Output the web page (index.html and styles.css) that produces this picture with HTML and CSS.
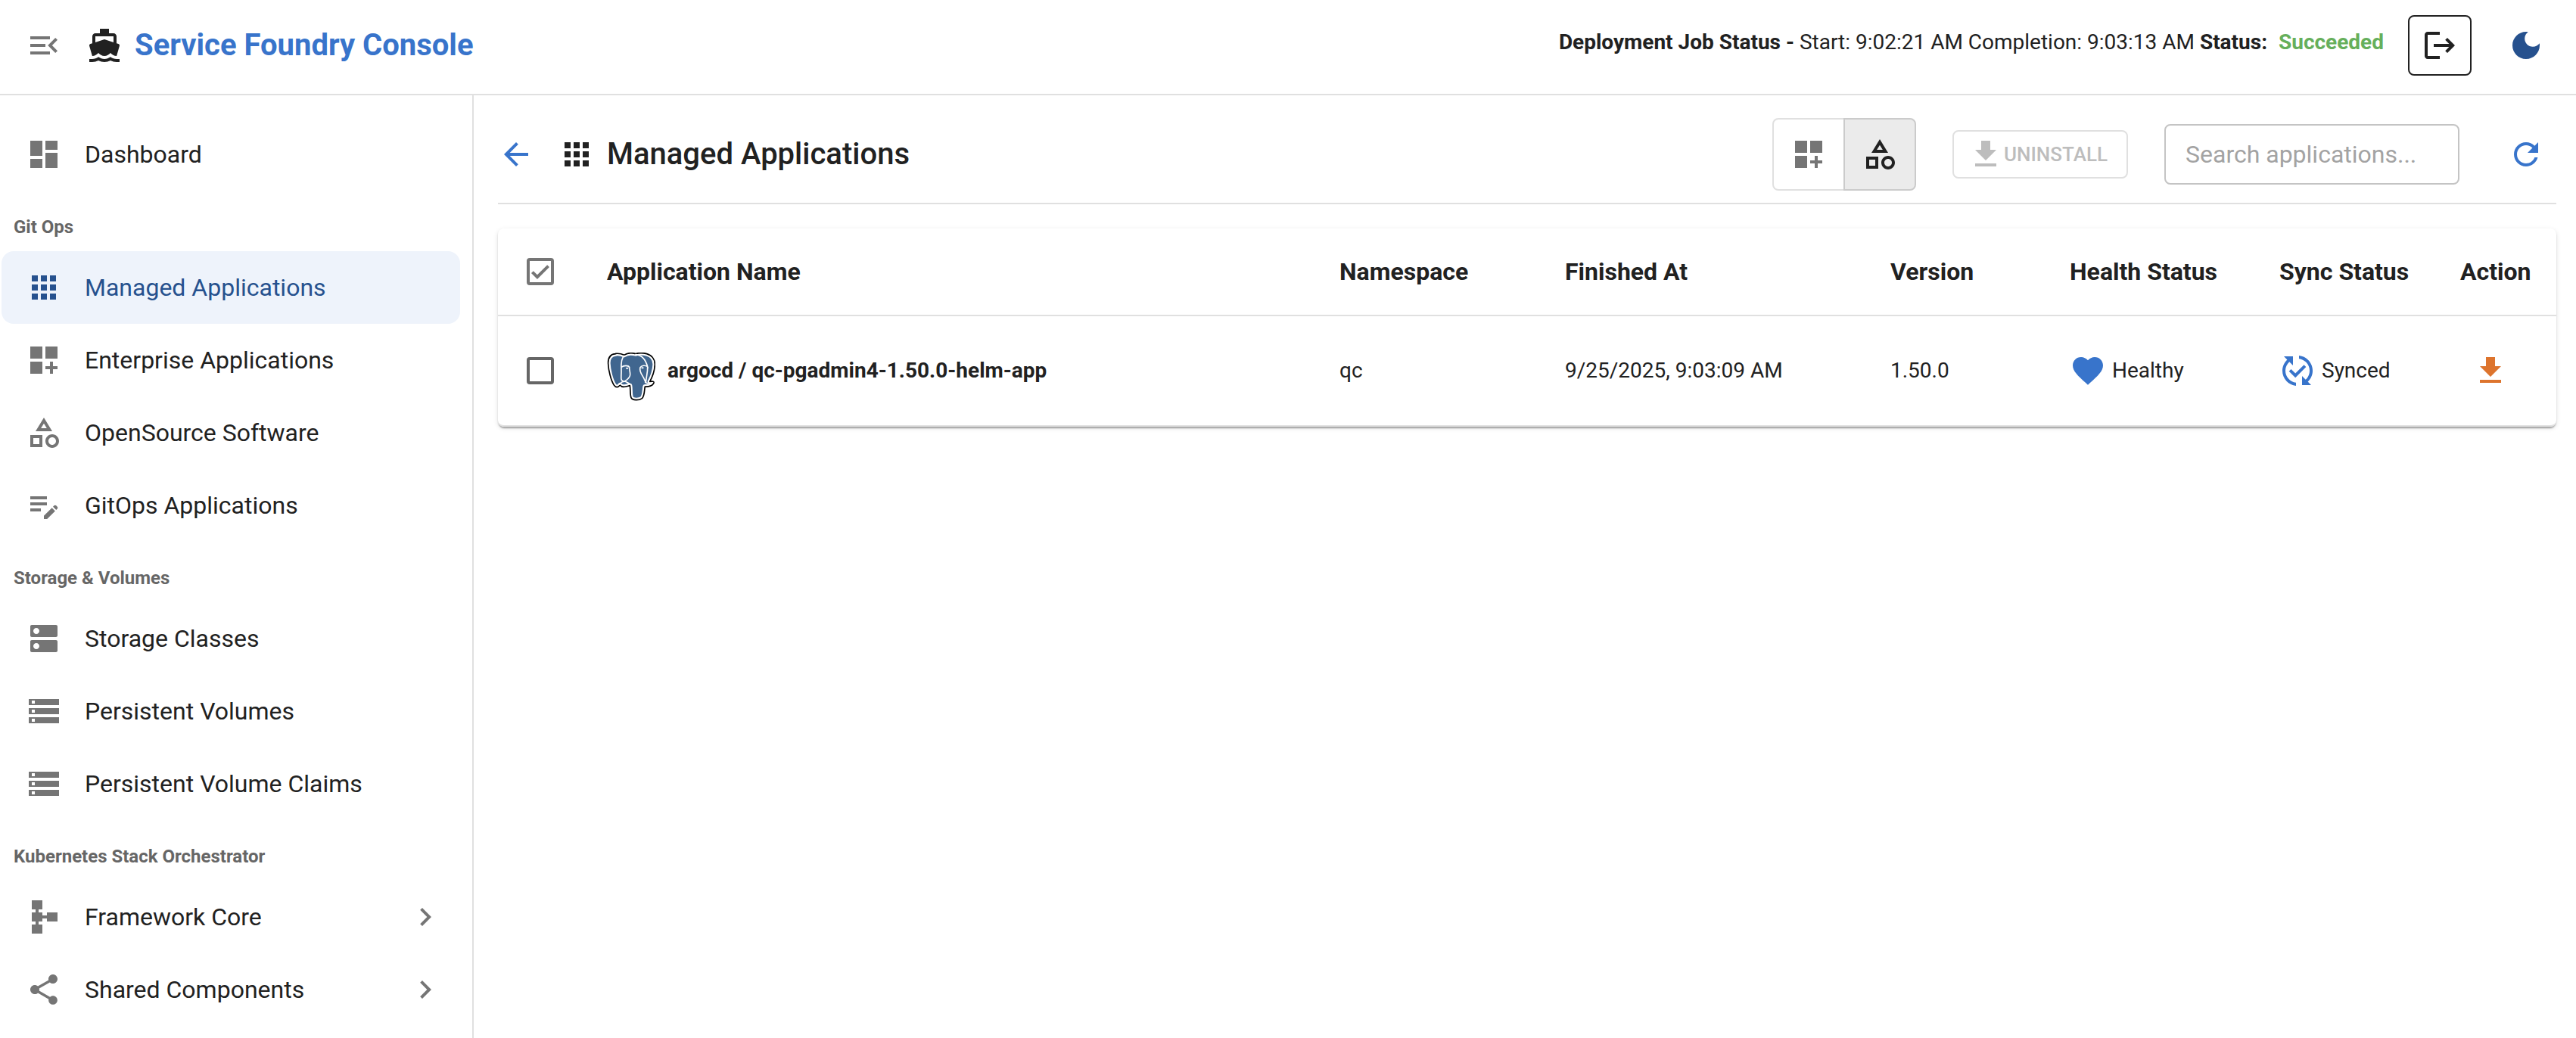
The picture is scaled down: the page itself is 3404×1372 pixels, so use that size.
FILE: index.html
```html
<!DOCTYPE html>
<html lang="en">
<head>
<meta charset="utf-8">
<title>Service Foundry Console</title>
<meta name="viewport" content="width=device-width, initial-scale=1">
<link rel="stylesheet" href="styles.css">
</head>
<body>
<svg class="sprite" aria-hidden="true">
  <symbol id="i-menu" viewBox="0 0 24 24"><path d="M3 18h13v-2H3v2zm0-5h10v-2H3v2zm0-7v2h13V6H3zm18 9.59L17.42 12 21 8.41 19.59 7l-5 5 5 5L21 15.59z"/></symbol>
  <symbol id="i-boat" viewBox="0 0 24 24"><path d="M20 21c-1.39 0-2.78-.47-4-1.32-2.44 1.71-5.56 1.71-8 0C6.78 20.53 5.39 21 4 21H2v2h2c1.38 0 2.74-.35 4-.99 2.52 1.29 5.48 1.29 8 0 1.26.65 2.62.99 4 .99h2v-2h-2zM3.95 19H4c1.6 0 3.02-.88 4-2 .98 1.12 2.4 2 4 2s3.02-.88 4-2c.98 1.12 2.4 2 4 2h.05l1.89-6.68c.08-.26.06-.54-.06-.78s-.34-.42-.6-.5L20 10.62V6c0-1.1-.9-2-2-2h-3V1H9v3H6c-1.1 0-2 .9-2 2v4.62l-1.29.42c-.26.08-.48.26-.6.5s-.15.52-.06.78L3.95 19zM6 6h12v3.97L12 8 6 9.97V6z"/></symbol>
  <symbol id="i-dashboard" viewBox="0 0 24 24"><path d="M3 13h8V3H3v10zm0 8h8v-6H3v6zm10 0h8V11h-8v10zm0-18v6h8V3h-8z"/></symbol>
  <symbol id="i-apps" viewBox="0 0 24 24"><path d="M4 8h4V4H4v4zm6 12h4v-4h-4v4zm-6 0h4v-4H4v4zm0-6h4v-4H4v4zm6 0h4v-4h-4v4zm6-10v4h4V4h-4zm-6 4h4V4h-4v4zm6 6h4v-4h-4v4zm0 6h4v-4h-4v4z"/></symbol>
  <symbol id="i-customize" viewBox="0 0 24 24"><path d="M3 3h8v8H3zm10 0h8v8h-8zM3 13h8v8H3zm15 0h-2v3h-3v2h3v3h2v-3h3v-2h-3z"/></symbol>
  <symbol id="i-category" viewBox="0 0 24 24"><path d="M12 2l-5.5 9h11L12 2zm0 3.84L13.93 9h-3.87L12 5.84zM17.5 13c-2.49 0-4.5 2.01-4.5 4.5s2.01 4.5 4.5 4.5 4.5-2.01 4.5-4.5-2.01-4.5-4.5-4.5zm0 7c-1.38 0-2.5-1.12-2.5-2.5s1.12-2.5 2.5-2.5 2.5 1.12 2.5 2.5-1.12 2.5-2.5 2.5zM3 21.5h8v-8H3v8zm2-6h4v4H5v-4z"/></symbol>
  <symbol id="i-editnote" viewBox="0 0 24 24"><path d="M3 10h11v2H3v-2zm0-2h11V6H3v2zm0 8h7v-2H3v2zm15.01-3.13.71-.71c.39-.39 1.02-.39 1.41 0l.71.71c.39.39.39 1.02 0 1.41l-.71.71-2.12-2.12zm-.71.71-5.3 5.3V21h2.12l5.3-5.3-2.12-2.12z"/></symbol>
  <symbol id="i-dns" viewBox="0 0 24 24"><path d="M20 13H4c-.55 0-1 .45-1 1v6c0 .55.45 1 1 1h16c.55 0 1-.45 1-1v-6c0-.55-.45-1-1-1zM7 19c-1.1 0-2-.9-2-2s.9-2 2-2 2 .9 2 2-.9 2-2 2zM20 3H4c-.55 0-1 .45-1 1v6c0 .55.45 1 1 1h16c.55 0 1-.45 1-1V4c0-.55-.45-1-1-1zM7 9c-1.1 0-2-.9-2-2s.9-2 2-2 2 .9 2 2-.9 2-2 2z"/></symbol>
  <symbol id="i-storage" viewBox="0 0 24 24"><path d="M2 20h20v-4H2v4zm2-3h2v2H4v-2zM2 4v4h20V4H2zm4 3H4V5h2v2zm-4 7h20v-4H2v4zm2-3h2v2H4v-2z"/></symbol>
  <symbol id="i-schema" viewBox="0 0 24 24"><path d="M14 9v2h-3V9H8.5V7H11V1H4v6h2.5v2H4v6h2.5v2H4v6h7v-6H8.5v-2H11v-2h3v2h7V9z"/></symbol>
  <symbol id="i-share" viewBox="0 0 24 24"><path d="M18 16.08c-.76 0-1.44.3-1.96.77L8.91 12.7c.05-.23.09-.46.09-.7s-.04-.47-.09-.7l7.05-4.11c.54.5 1.25.81 2.04.81 1.66 0 3-1.34 3-3s-1.34-3-3-3-3 1.34-3 3c0 .24.04.47.09.7L8.04 9.81C7.5 9.31 6.79 9 6 9c-1.66 0-3 1.34-3 3s1.34 3 3 3c.79 0 1.5-.31 2.04-.81l7.12 4.16c-.05.21-.08.43-.08.65 0 1.61 1.31 2.92 2.92 2.92 1.61 0 2.92-1.31 2.92-2.92s-1.31-2.92-2.92-2.92z"/></symbol>
  <symbol id="i-chevron" viewBox="0 0 24 24"><path d="M10 6 8.59 7.41 13.17 12l-4.58 4.59L10 18l6-6z"/></symbol>
  <symbol id="i-logout" viewBox="0 0 24 24"><path d="m17 7-1.41 1.41L18.17 11H8v2h10.17l-2.58 2.58L17 17l5-5zM4 5h8V3H4c-1.1 0-2 .9-2 2v14c0 1.1.9 2 2 2h8v-2H4V5z"/></symbol>
  <symbol id="i-moon" viewBox="0 0 24 24"><path d="M12 3c-4.97 0-9 4.03-9 9s4.03 9 9 9 9-4.03 9-9c0-.46-.04-.92-.1-1.36-.98 1.37-2.58 2.26-4.4 2.26-2.98 0-5.4-2.42-5.4-5.4 0-1.81.89-3.42 2.26-4.4-.44-.06-.9-.1-1.36-.1z"/></symbol>
  <symbol id="i-back" viewBox="0 0 24 24"><path d="M20 11H7.83l5.59-5.59L12 4l-8 8 8 8 1.41-1.41L7.83 13H20v-2z"/></symbol>
  <symbol id="i-download" viewBox="0 0 24 24"><path d="M5 20h14v-2H5v2zM19 9h-4V3H9v6H5l7 7 7-7z"/></symbol>
  <symbol id="i-refresh" viewBox="0 0 24 24"><path d="M17.65 6.35C16.2 4.9 14.21 4 12 4c-4.42 0-7.99 3.58-7.99 8s3.57 8 7.99 8c3.73 0 6.84-2.55 7.73-6h-2.08c-.82 2.33-3.04 4-5.65 4-3.31 0-6-2.69-6-6s2.69-6 6-6c1.66 0 3.14.69 4.22 1.78L13 11h7V4l-2.35 2.35z"/></symbol>
  <symbol id="i-heart" viewBox="0 0 24 24"><path d="m12 21.35-1.45-1.32C5.4 15.36 2 12.28 2 8.5 2 5.42 4.42 3 7.5 3c1.74 0 3.41.81 4.5 2.09C13.09 3.81 14.76 3 16.5 3 19.58 3 22 5.42 22 8.5c0 3.78-3.4 6.86-8.55 11.54L12 21.35z"/></symbol>
  <symbol id="i-synced" viewBox="0 0 24 24"><path d="m17.66 9.53-7.07 7.07-4.24-4.24 1.41-1.41 2.83 2.83 5.66-5.66 1.41 1.41zM4 12c0-2.33 1.02-4.42 2.62-5.88L9 8.5v-6H3l2.2 2.2C3.24 6.52 2 9.11 2 12c0 5.19 3.95 9.45 9 9.95v-2.02c-3.94-.49-7-3.86-7-7.93zm18 0c0-5.19-3.95-9.45-9-9.95v2.02c3.94.49 7 3.86 7 7.93 0 2.33-1.02 4.42-2.62 5.88L15 15.5v6h6l-2.2-2.2c1.96-1.82 3.2-4.41 3.2-7.3z"/></symbol>
</svg>

<header class="topbar">
  <button class="icon-button muted" type="button" aria-label="Collapse menu"><svg class="icon"><use href="#i-menu"/></svg></button>
  <div class="brand">
    <svg class="icon" aria-hidden="true"><use href="#i-boat"/></svg>
    <span class="brand-name">Service Foundry Console</span>
  </div>
  <div class="topbar-end">
    <p class="job-status"><strong>Deployment Job Status -</strong> Start: 9:02:21 AM Completion: 9:03:13 AM <strong>Status:</strong> <strong class="job-result">Succeeded</strong></p>
    <button class="logout" type="button" aria-label="Log out"><svg class="icon"><use href="#i-logout"/></svg></button>
    <button class="icon-button padded theme" type="button" aria-label="Dark mode"><svg class="icon"><use href="#i-moon"/></svg></button>
  </div>
</header>

<div class="layout">
  <nav class="sidebar" aria-label="Main">
    <a class="nav-item" href="#"><svg class="icon"><use href="#i-dashboard"/></svg><span class="nav-label">Dashboard</span></a>
    <h2 class="nav-heading">Git Ops</h2>
    <a class="nav-item selected" href="#" aria-current="page"><svg class="icon"><use href="#i-apps"/></svg><span class="nav-label">Managed Applications</span></a>
    <a class="nav-item" href="#"><svg class="icon"><use href="#i-customize"/></svg><span class="nav-label">Enterprise Applications</span></a>
    <a class="nav-item" href="#"><svg class="icon"><use href="#i-category"/></svg><span class="nav-label">OpenSource Software</span></a>
    <a class="nav-item" href="#"><svg class="icon"><use href="#i-editnote"/></svg><span class="nav-label">GitOps Applications</span></a>
    <h2 class="nav-heading">Storage &amp; Volumes</h2>
    <a class="nav-item" href="#"><svg class="icon"><use href="#i-dns"/></svg><span class="nav-label">Storage Classes</span></a>
    <a class="nav-item" href="#"><svg class="icon"><use href="#i-storage"/></svg><span class="nav-label">Persistent Volumes</span></a>
    <a class="nav-item" href="#"><svg class="icon"><use href="#i-storage"/></svg><span class="nav-label">Persistent Volume Claims</span></a>
    <h2 class="nav-heading">Kubernetes Stack Orchestrator</h2>
    <a class="nav-item" href="#"><svg class="icon"><use href="#i-schema"/></svg><span class="nav-label">Framework Core</span><svg class="icon"><use href="#i-chevron"/></svg></a>
    <a class="nav-item" href="#"><svg class="icon"><use href="#i-share"/></svg><span class="nav-label">Shared Components</span><svg class="icon"><use href="#i-chevron"/></svg></a>
  </nav>

  <main class="content">
    <div class="page-bar">
      <a class="back" href="#" aria-label="Back"><svg class="icon"><use href="#i-back"/></svg></a>
      <div class="page-title">
        <svg class="icon" aria-hidden="true"><use href="#i-apps"/></svg>
        <h1 class="page-name">Managed Applications</h1>
      </div>
      <div class="page-tools">
        <div class="toggle-group" role="group" aria-label="Application type">
          <button class="toggle" type="button" aria-label="Enterprise applications" aria-pressed="false"><svg class="icon"><use href="#i-customize"/></svg></button>
          <button class="toggle on" type="button" aria-label="Open source software" aria-pressed="true"><svg class="icon"><use href="#i-category"/></svg></button>
        </div>
        <button class="uninstall" type="button" disabled><svg class="icon"><use href="#i-download"/></svg>UNINSTALL</button>
        <input class="search" type="search" placeholder="Search applications..." aria-label="Search applications">
        <button class="icon-button padded primary" type="button" aria-label="Refresh"><svg class="icon"><use href="#i-refresh"/></svg></button>
      </div>
    </div>

    <div class="card">
      <table class="apps">
        <colgroup>
          <col class="col-check"><col><col class="col-namespace"><col class="col-finished"><col class="col-version"><col class="col-health"><col class="col-sync"><col class="col-action">
        </colgroup>
        <thead>
          <tr>
            <th><input class="check check-all" type="checkbox" aria-label="Select all" checked></th>
            <th>Application Name</th>
            <th>Namespace</th>
            <th>Finished At</th>
            <th>Version</th>
            <th>Health Status</th>
            <th>Sync Status</th>
            <th>Action</th>
          </tr>
        </thead>
        <tbody>
          <tr>
            <td><input class="check" type="checkbox" aria-label="Select qc-pgadmin4"></td>
            <td>
              <div class="app">
                <svg class="app-logo" viewBox="0 0 192 192" aria-hidden="true">
                  <path class="logo-body" d="M35 5C14 6 4 20 5 44c1 26 11 66 23 85 8 12 17 9 24 0 5 7 14 8 22 6 6-1 12-3 17-4 3 14 0 35 5 48 5 12 32 11 43 3 11-10 9-34 12-47 13 1 32-3 35-15 1-5-4-7-16-5 10-18 19-48 20-66 1-21-11-38-32-44-18-5-32-4-44 0-14-4-33-4-46 5-9-5-21-7-33-6z"/>
                  <path class="logo-edge" d="M35 5C14 6 4 20 5 44c1 26 11 66 23 85 8 12 17 9 24 0 5 7 14 8 22 6 6-1 12-3 17-4 3 14 0 35 5 48 5 12 32 11 43 3 11-10 9-34 12-47 13 1 32-3 35-15 1-5-4-7-16-5 10-18 19-48 20-66 1-21-11-38-32-44-18-5-32-4-44 0-14-4-33-4-46 5-9-5-21-7-33-6z"/>
                  <path class="logo-line" d="M68 13C56 23 56 45 57 66c1 25-3 36 1 43 4 6 9 6 14 4 8-5 18-12 20-24 1-12-4-21-3-31-4-8-22-8-32 0M114 8c25 2 40 22 47 48-9-7-24-5-29 3-3 9 3 24 10 35 6 9 8 17 12 24M161 56c1 20-3 30-7 62"/>
                  <path class="logo-line" d="M50 126c5-8 11-11 22-12M72 114l18 10M152 118c4 5 10 5 22 4"/>
                  <ellipse class="logo-eye" cx="80" cy="62" rx="5" ry="3"/>
                  <ellipse class="logo-eye" cx="141" cy="61" rx="5" ry="3"/>
                </svg>
                <strong class="app-name">argocd / qc-pgadmin4-1.50.0-helm-app</strong>
              </div>
            </td>
            <td>qc</td>
            <td>9/25/2025, 9:03:09 AM</td>
            <td>1.50.0</td>
            <td><span class="state"><svg class="icon" aria-hidden="true"><use href="#i-heart"/></svg>Healthy</span></td>
            <td><span class="state"><svg class="icon" aria-hidden="true"><use href="#i-synced"/></svg>Synced</span></td>
            <td><button class="icon-button padded warn" type="button" aria-label="Uninstall application"><svg class="icon"><use href="#i-download"/></svg></button></td>
          </tr>
        </tbody>
      </table>
    </div>
  </main>
</div>
</body>
</html>
```
FILE: styles.css
```css
:root {
  --text: #212121;
  --muted: #757575;
  --primary: #3874cb;
  --primary-dark: #26518e;
  --line: #e0e0e0;
}

* { box-sizing: border-box; }

body {
  margin: 0;
  min-height: 100vh;
  display: flex;
  flex-direction: column;
  background: #fff;
  color: var(--text);
  font-family: Roboto, "Liberation Sans", sans-serif;
  font-size: 28px;
  line-height: 40px;
}

button, input { font: inherit; color: inherit; margin: 0; }
button { cursor: pointer; }
a { color: inherit; text-decoration: none; }
h1, h2, p { margin: 0; }

.sprite { display: none; }

.icon {
  display: block;
  flex: none;
  width: 48px;
  height: 48px;
  fill: currentColor;
}

.icon-button {
  display: block;
  padding: 0;
  border: 0;
  background: none;
}
.icon-button.padded { padding: 16px; }
.icon-button.muted { color: var(--muted); }
.icon-button.primary { color: var(--primary); }
.icon-button.theme { color: var(--primary-dark); }
.icon-button.warn { color: #dd742d; }

/* Top bar */
.topbar {
  display: flex;
  align-items: center;
  gap: 32px;
  padding: 20px 26px 24px 34px;
  border-bottom: 2px solid var(--line);
}
.brand { display: flex; align-items: center; gap: 16px; }
.brand-name {
  color: var(--primary);
  font-size: 40px;
  font-weight: 700;
  line-height: 48px;
}
.topbar-end {
  display: flex;
  align-items: center;
  gap: 32px;
  margin-left: auto;
}
.job-status { padding-bottom: 8px; }
.job-status strong { font-weight: 700; }
.job-status .job-result { margin-left: 8px; color: #66af5b; }
.logout {
  padding: 14px 16px;
  border: 2px solid var(--text);
  border-radius: 8px;
  background: none;
}

/* Side navigation */
.layout { flex: 1; display: flex; }
.sidebar {
  flex: none;
  width: 626px;
  padding: 30px 16px 0 2px;
  border-right: 2px solid var(--line);
}
.nav-item {
  display: flex;
  align-items: center;
  gap: 30px;
  padding: 24px 22px 24px 32px;
  border-radius: 16px;
  font-size: 32px;
  line-height: 48px;
}
.nav-item .icon { color: var(--muted); }
.nav-label { flex: 1; }
.nav-item.selected { background: #eef3fb; color: var(--primary-dark); }
.nav-item.selected .icon { color: var(--primary-dark); }
.nav-heading {
  padding: 24px 16px 8px;
  color: #666;
  font-size: 24px;
  font-weight: 700;
  line-height: 48px;
}

/* Page bar */
.content { flex: 1; min-width: 0; padding: 30px 26px 30px 32px; }
.page-bar {
  display: flex;
  align-items: center;
  gap: 32px;
  padding-bottom: 16px;
  border-bottom: 2px solid var(--line);
}
.back { color: var(--primary); }
.page-title { display: flex; align-items: center; gap: 16px; }
.page-name { font-size: 40px; font-weight: 500; line-height: 48px; }
.page-tools {
  display: flex;
  align-items: center;
  gap: 48px;
  margin-left: auto;
}
.toggle-group { display: flex; }
.toggle {
  padding: 22px;
  border: 2px solid var(--line);
  border-right: 0;
  border-radius: 8px 0 0 8px;
  background: none;
  color: var(--muted);
}
.toggle.on {
  border: 2px solid #cbcbcb;
  border-radius: 0 8px 8px 0;
  background: #ebebeb;
  color: var(--text);
}
.uninstall {
  display: flex;
  align-items: center;
  min-width: 232px;
  height: 64px;
  padding: 0 18px;
  border: 2px solid var(--line);
  border-radius: 8px;
  background: none;
  color: #bdbdbd;
  font-size: 26px;
  font-weight: 500;
}
.search {
  width: 390px;
  height: 80px;
  padding: 0 26px;
  border: 2px solid #c4c4c4;
  border-radius: 8px;
  background: none;
  font-size: 32px;
}
.search::placeholder { color: #a3a3a3; opacity: 1; }

/* Applications table */
.card {
  margin-top: 32px;
  border-radius: 8px;
  background: #fff;
  box-shadow: 0 4px 2px -2px rgba(0, 0, 0, .2), 0 2px 2px 0 rgba(0, 0, 0, .14), 0 2px 6px 0 rgba(0, 0, 0, .12);
}
.apps {
  width: 100%;
  table-layout: fixed;
  border-collapse: separate;
  border-spacing: 0;
}
.col-check { width: 112px; }
.col-namespace { width: 298px; }
.col-finished { width: 430px; }
.col-version { width: 237px; }
.col-health { width: 277px; }
.col-sync { width: 239px; }
.col-action { width: 159px; }
.apps th, .apps td {
  padding: 32px 0 32px 32px;
  border-bottom: 2px solid var(--line);
  text-align: left;
  vertical-align: middle;
}
.apps tbody tr:last-child td:first-child { border-bottom-left-radius: 8px; }
.apps tbody tr:last-child td:last-child { border-bottom-right-radius: 8px; }
.apps th { height: 116px; font-size: 32px; font-weight: 700; line-height: 48px; }
.check {
  display: block;
  appearance: none;
  width: 36px;
  height: 36px;
  margin-left: 6px;
  border: 4px solid #666;
  border-radius: 4px;
}
.check-all { border-color: var(--muted); }
.check-all:checked {
  background: url("data:image/svg+xml,%3Csvg xmlns='http://www.w3.org/2000/svg' viewBox='3 3 18 18'%3E%3Cpath fill='%23757575' d='M17.99 9l-1.41-1.42-6.59 6.59-2.58-2.57-1.42 1.41 4 3.99z'/%3E%3C/svg%3E") border-box;
}
.app { display: flex; align-items: center; gap: 16px; }
.app-logo { width: 64px; height: 80px; padding-top: 16px; }
.app-name { font-weight: 700; }
.logo-body { fill: #40668f; stroke: #fff; stroke-width: 18; stroke-linejoin: round; }
.logo-edge { fill: none; stroke: #000; stroke-width: 5; stroke-linejoin: round; }
.logo-line { fill: none; stroke: #fff; stroke-width: 5; stroke-linecap: round; }
.logo-eye { fill: #fff; }
.state { display: flex; align-items: center; gap: 8px; }
.state .icon { color: var(--primary); }
```
